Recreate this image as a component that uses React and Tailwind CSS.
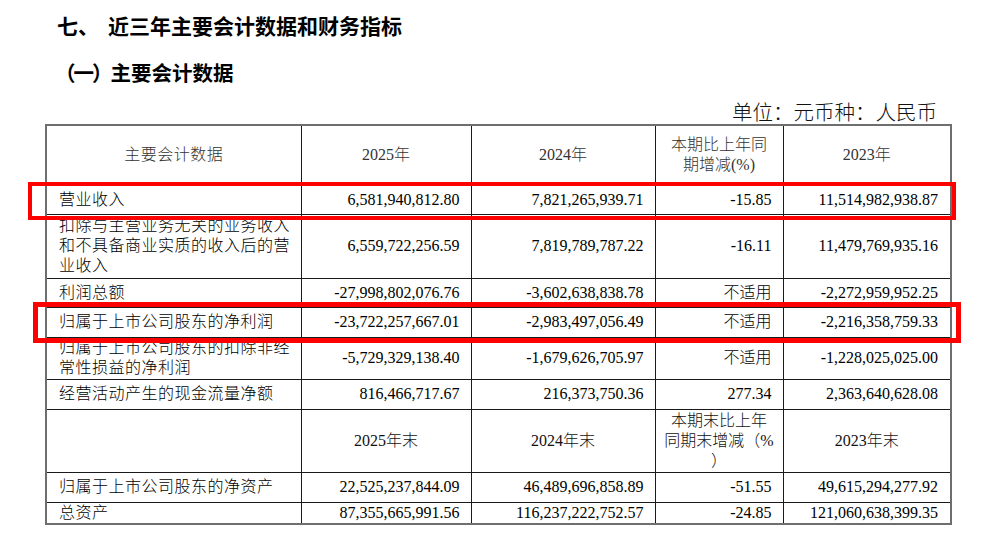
const serif = "font-['Liberation_Serif','Noto_Sans_CJK_SC',serif]";

const rows = [
  {
    h: 29,
    label: ["营业收入"],
    v: ["6,581,940,812.80", "7,821,265,939.71", "-15.85", "11,514,982,938.87"],
  },
  {
    h: 64,
    label: ["扣除与主营业务无关的业务收入", "和不具备商业实质的收入后的营", "业收入"],
    v: ["6,559,722,256.59", "7,819,789,787.22", "-16.11", "11,479,769,935.16"],
  },
  {
    h: 29,
    label: ["利润总额"],
    v: ["-27,998,802,076.76", "-3,602,638,838.78", "不适用", "-2,272,959,952.25"],
  },
  {
    h: 30,
    label: ["归属于上市公司股东的净利润"],
    v: ["-23,722,257,667.01", "-2,983,497,056.49", "不适用", "-2,216,358,759.33"],
  },
  {
    h: 42,
    label: ["归属于上市公司股东的扣除非经", "常性损益的净利润"],
    v: ["-5,729,329,138.40", "-1,679,626,705.97", "不适用", "-1,228,025,025.00"],
  },
  {
    h: 30,
    label: ["经营活动产生的现金流量净额"],
    v: ["816,466,717.67", "216,373,750.36", "277.34", "2,363,640,628.08"],
  },
];

const assetRows = [
  {
    h: 30,
    label: ["归属于上市公司股东的净资产"],
    v: ["22,525,237,844.09", "46,489,696,858.89", "-51.55", "49,615,294,277.92"],
  },
  {
    h: 21,
    label: ["总资产"],
    v: ["87,355,665,991.56", "116,237,222,752.57", "-24.85", "121,060,638,399.35"],
  },
];

const cell = "border border-[#1a1a1a] p-0 align-middle leading-[20px]";

function Lines({ lines }) {
  return lines.map((l, i) => (
    <span key={i} className="block">
      {l}
    </span>
  ));
}

function DataRow({ row }) {
  return (
    <tr style={{ height: row.h }}>
      <td className={`${cell} pl-[12px] text-left tracking-[0.5px]`}>
        <Lines lines={row.label} />
      </td>
      {row.v.map((val, i) => (
        <td key={i} className={`${cell} text-right ${i === 3 ? "pr-[12px]" : "pr-[11px]"}`}>
          {val}
        </td>
      ))}
    </tr>
  );
}

export default function App() {
  return (
    <div className="relative w-[1005px] h-[552px] bg-white overflow-hidden text-black">
      <h1 className="pl-[57px] pt-[10px] text-[21px] leading-[30px] font-bold font-['Noto_Sans_CJK_SC',sans-serif]">
        七、<span className="ml-[9px]">近三年主要会计数据和财务指标</span>
      </h1>
      <h2 className="mt-[17px] pl-[55px] text-[20.5px] leading-[30px] font-bold font-['Noto_Sans_CJK_SC',sans-serif]">
        <span className="tracking-[-2px]">（一）</span>主要会计数据
      </h2>
      <div className="mt-[11px] w-[937px] text-right text-[20.5px] leading-[26px] font-light font-['Noto_Sans_CJK_SC',sans-serif] text-[#111]">
        单位：元币种：人民币
      </div>

      <table className={`ml-[45px] w-[905px] table-fixed border-collapse border-2 border-[#6e6e6e] text-[16px] font-light ${serif}`}>
        <colgroup>
          <col className="w-[255px]" />
          <col className="w-[170px]" />
          <col className="w-[184px]" />
          <col className="w-[128px]" />
          <col className="w-[168px]" />
        </colgroup>
        <tbody>
          <tr className="h-[60px] text-[#333] text-center">
            <td className={`${cell} tracking-[0.5px]`}>主要会计数据</td>
            <td className={cell}>2025年</td>
            <td className={cell}>2024年</td>
            <td className={cell}>
              <Lines lines={["本期比上年同", "期增减(%)"]} />
            </td>
            <td className={cell}>2023年</td>
          </tr>
          {rows.map((r, i) => (
            <DataRow key={i} row={r} />
          ))}
          <tr className="h-[63px] text-[#111] text-center">
            <td className={cell}></td>
            <td className={cell}>2025年末</td>
            <td className={cell}>2024年末</td>
            <td className={cell}>
              <Lines lines={["本期末比上年", "同期末增减（%", "）"]} />
            </td>
            <td className={cell}>2023年末</td>
          </tr>
          {assetRows.map((r, i) => (
            <DataRow key={i} row={r} />
          ))}
        </tbody>
      </table>

      {/* red highlight boxes */}
      <div className="absolute left-[28px] top-[182px] w-[928px] h-[38px] border-4 border-[#ff0000]" />
      <div className="absolute left-[33px] top-[302px] w-[928px] h-[41px] border-[5px] border-[#ff0000]" />
    </div>
  );
}
